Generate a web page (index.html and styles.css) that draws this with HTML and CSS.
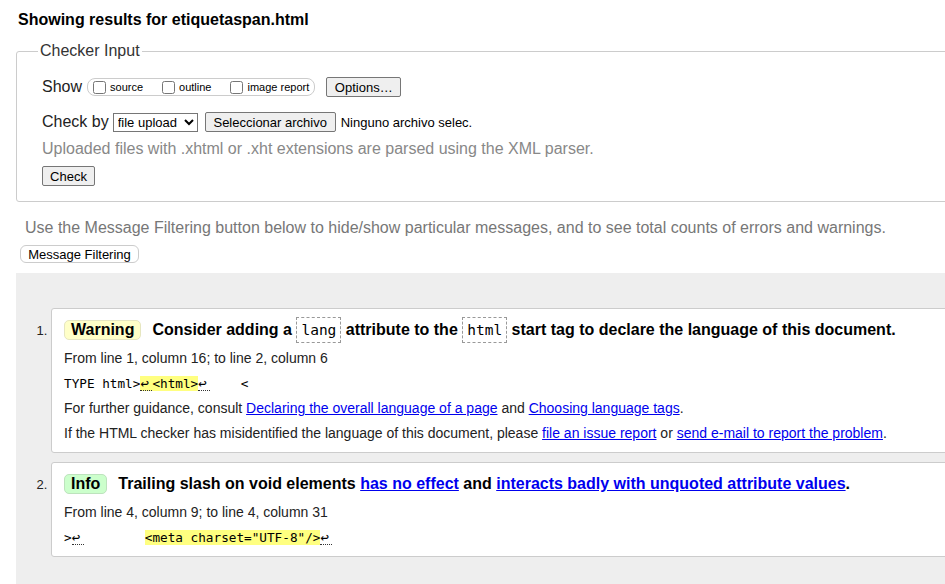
FILE: index.html
```html
<!DOCTYPE html>
<html lang="en">
<head>
<meta charset="utf-8">
<title>Showing results for etiquetaspan.html - Nu Html Checker</title>
<link rel="stylesheet" href="styles.css">
</head>
<body>
<div class="page">
  <h2 class="results-title">Showing results for etiquetaspan.html</h2>

  <fieldset class="checker">
    <legend class="checker-legend">Checker Input</legend>
    <div class="row row-show">
      <span class="row-label">Show</span>
      <span class="show-group">
        <label class="opt"><input type="checkbox" class="cb">source</label>
        <label class="opt"><input type="checkbox" class="cb">outline</label>
        <label class="opt"><input type="checkbox" class="cb">image report</label>
      </span>
      <button class="btn btn-options" type="button">Options…</button>
    </div>
    <div class="row row-checkby">
      <span class="row-label">Check by</span>
      <select class="sel"><option>file upload</option></select>
      <button class="btn btn-file" type="button">Seleccionar archivo</button>
      <span class="file-name">Ninguno archivo selec.</span>
    </div>
    <p class="hint">Uploaded files with .xhtml or .xht extensions are parsed using the XML parser.</p>
    <div class="row row-check">
      <button class="btn btn-check" type="button">Check</button>
    </div>
  </fieldset>

  <p class="filter-note">Use the Message Filtering button below to hide/show particular messages, and to see total counts of errors and warnings.</p>
  <button class="btn-filter" type="button">Message Filtering</button>

  <div class="results">
    <ol class="messages">
      <li class="msg">
        <p class="msg-title"><span class="badge badge-warning">Warning</span><span class="msg-text">Consider adding a <code class="chip">lang</code> attribute to the <code class="chip">html</code> start tag to declare the language of this document.</span></p>
        <p class="loc">From line 1, column 16; to line 2, column 6</p>
        <p class="extract"><code class="ex">TYPE html&gt;<mark class="hl"><span class="lf">↩</span>&lt;html&gt;</mark><span class="lf">↩</span>    &lt;</code></p>
        <p class="info">For further guidance, consult <a href="#">Declaring the overall language of a page</a> and <a href="#">Choosing language tags</a>.</p>
        <p class="info">If the HTML checker has misidentified the language of this document, please <a href="#">file an issue report</a> or <a href="#">send e-mail to report the problem</a>.</p>
      </li>
      <li class="msg">
        <p class="msg-title"><span class="badge badge-info">Info</span><span class="msg-text">Trailing slash on void elements <a href="#">has no effect</a> and <a href="#">interacts badly with unquoted attribute values</a>.</span></p>
        <p class="loc">From line 4, column 9; to line 4, column 31</p>
        <p class="extract"><code class="ex">&gt;<span class="lf">↩</span>        <mark class="hl">&lt;meta charset="UTF-8"/&gt;</mark><span class="lf">↩</span></code></p>
      </li>
    </ol>
  </div>
</div>
</body>
</html>
```

FILE: styles.css
```css
html, body {
  margin: 0;
  padding: 0;
  overflow: hidden;
  background: #fff;
}

body {
  font-family: "Liberation Sans", Arial, sans-serif;
  color: #000;
}

.page {
  width: 1100px;
  padding: 0 0 0 16px;
  box-sizing: border-box;
  height: 584px;
  display: flex;
  flex-direction: column;
  align-items: flex-start;
}

.results-title {
  font-size: 16px;
  font-weight: bold;
  line-height: 20px;
  margin: 10px 0 12px 2px;
}

.checker {
  align-self: stretch;
  margin: 0;
  border: 1px solid #ccc;
  border-radius: 3px;
  padding: 0 0 15px 25px;
}

.checker-legend {
  font-size: 16px;
  line-height: 18px;
  color: #333;
  padding: 0 2px;
  margin-left: -4px;
}

.row {
  display: flex;
  align-items: center;
  height: 22px;
}

.row-show {
  margin-top: 16px;
}

.row-checkby {
  margin-top: 13px;
}

.row-check {
  height: 20px;
  margin-top: 7px;
}

.row-label {
  font-size: 16px;
  color: #222;
}

.show-group {
  display: flex;
  align-items: center;
  gap: 19px;
  height: 16px;
  margin-left: 5px;
  padding: 0 5px 0 5px;
  border: 1px solid #ccc;
  border-radius: 8px;
}

.opt {
  display: flex;
  align-items: center;
  font-size: 11px;
  color: #000;
}

.cb {
  width: 13px;
  height: 13px;
  margin: 0 4px 0 0;
}

.btn {
  font-family: "Liberation Sans", Arial, sans-serif;
  font-size: 13px;
  height: 20px;
  padding: 0 7px;
  background: #efefef;
  border: 1px solid #767676;
  border-radius: 2px;
  color: #000;
}

.btn-options {
  width: 75px;
  margin-left: 11px;
}

.sel {
  font-family: "Liberation Sans", Arial, sans-serif;
  font-size: 13px;
  width: 85px;
  height: 19px;
  margin-left: 4px;
  padding: 0;
  border: 1px solid #767676;
  border-radius: 0;
  background: #fff;
  color: #000;
}

.btn-file {
  width: 131px;
  margin-left: 7px;
}

.file-name {
  font-size: 13px;
  margin-left: 5px;
}

.hint {
  font-size: 16px;
  line-height: 20px;
  color: #888;
  margin: 6px 0 0;
}

.btn-check {
  width: 53px;
}

.filter-note {
  font-size: 16px;
  line-height: 20px;
  color: #777;
  margin: 16px 0 0 9px;
}

.btn-filter {
  font-family: "Liberation Sans", Arial, sans-serif;
  font-size: 13px;
  height: 18px;
  width: 119px;
  padding: 0;
  margin: 7px 0 0 4px;
  background: #fff;
  border: 1px solid #ccc;
  border-radius: 6px;
  color: #000;
}

.results {
  align-self: stretch;
  flex: 1;
  margin-top: 10px;
  background: #eee;
  padding: 35px 0 0 35px;
}

.messages {
  margin: 0;
  padding: 0;
  list-style: decimal outside;
  display: flex;
  flex-direction: column;
  gap: 9px;
}

.msg {
  display: list-item;
  font-size: 14px;
  color: #222;
  background: #fff;
  border: 1px solid #ccc;
  border-radius: 3px;
  padding: 8px 12px 6px 12px;
}

.msg::marker {
  font-size: 13px;
}

.msg p {
  margin: 0;
}

.msg-title {
  font-size: 16px;
  font-weight: bold;
  line-height: 26px;
  margin-bottom: 3px !important;
  color: #000;
}

.badge {
  display: inline-block;
  line-height: 18px;
  padding: 0 6px;
  border: 1px solid #ddd;
  border-radius: 5px;
  margin-right: 11px;
}

.badge-warning {
  background: #ffffc8;
  border-color: #e6e6c0;
}

.badge-info {
  background: #ccffcc;
  border-color: #bde3bd;
}

.chip {
  font-family: "DejaVu Sans Mono", "Liberation Mono", monospace;
  font-size: 14.5px;
  font-weight: normal;
  padding: 4px 4px;
  border: 1px dashed #999;
}

.loc,
.extract,
.info {
  line-height: 25px;
  height: 25px;
}

.ex {
  font-family: "DejaVu Sans Mono", "Liberation Mono", monospace;
  font-size: 12.7px;
  white-space: pre;
  color: #000;
}

.hl {
  background: #ffff80;
  color: #000;
}

.lf {
  display: inline-block;
  width: 12px;
  line-height: 14px;
  font-size: 14px;
  border-bottom: 1px dotted #333;
}

.msg a {
  color: #00e;
  text-decoration: underline;
}
```
